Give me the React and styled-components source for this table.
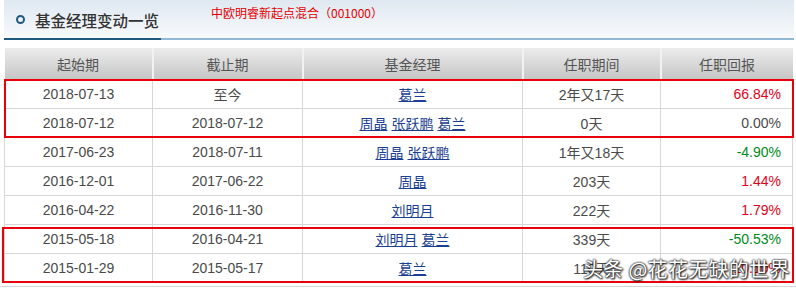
import styled, { createGlobalStyle } from 'styled-components';

const GlobalStyle = createGlobalStyle`
  body {
    margin: 0;
    background: #fff;
    font-family: "Liberation Sans", "Noto Sans CJK SC", sans-serif;
  }
`

const Page = styled.div`
  position: relative;
  width: 796px;
  height: 288px;
  overflow: hidden;
  padding-left: 4px;
  box-sizing: border-box;
`
const TitleBar = styled.div`
  width: 790px;
  height: 38px;
  background: linear-gradient(#dfe8f1, #f8fafc);
  display: flex;
  align-items: center;
`
const Ring = styled.span`
  width: 5px;
  height: 5px;
  border: 2px solid #1f5a7e;
  border-radius: 50%;
  margin-left: 12px;
  margin-right: 10px;
  margin-top: 1px;
`
const Title = styled.h2`
  margin: 2px 0 0;
  font-family: "Noto Sans CJK SC", sans-serif;
  font-size: 15.5px;
  font-weight: 500;
  color: #333;
  width: 176px;
`
const FundName = styled.span`
  font-family: "Noto Sans CJK SC", sans-serif;
  font-size: 12px;
  color: #e60000;
  align-self: flex-start;
  margin-top: 4px;
`
const Rule = styled.div`
  display: flex;
  width: 790px;
  height: 2px;
`
const RuleSeg = styled.div`
  height: 2px;
  width: ${p => p.$w};
  background: ${p => p.$c};
`
const Table = styled.table`
  margin-top: 8px;
  border-collapse: collapse;
  table-layout: fixed;
  width: 788px;
`
const Th = styled.th`
  height: 31px;
  padding: 0;
  font-family: "Noto Sans CJK SC", sans-serif;
  font-size: 14px;
  font-weight: normal;
  color: #555;
  background: linear-gradient(#ececec, #c6c6c6);
  border-left: 2px solid #f2f2f2;
  &:first-child { border-left: none; }
`
const Td = styled.td`
  height: 28px;
  padding: 0 ${p => (p.$right ? '11px' : '0')} 0 0;
  border: 1px solid #d6d6d6;
  text-align: ${p => (p.$right ? 'right' : 'center')};
  font-size: 14px;
  color: ${p => p.$color || '#4a4a4a'};
  font-family: "Liberation Sans", "Noto Sans CJK SC", sans-serif;
`
const Manager = styled.a`
  color: #1b3f93;
  text-decoration: underline;
  margin: 0 2px;
  font-family: "Noto Sans CJK SC", sans-serif;
  font-size: 14px;
`
const Mark = styled.div`
  position: absolute;
  left: ${p => p.$x}px;
  top: ${p => p.$y}px;
  width: ${p => p.$w}px;
  height: ${p => p.$h}px;
  border: 2px solid #e8000b;
  box-sizing: border-box;
  pointer-events: none;
`
const Below = styled.div`
  position: absolute;
  left: 0;
  top: 286px;
  width: 796px;
  height: 2px;
  border-top: 1px solid #d6d6d6;
`
const Watermark = styled.div`
  position: absolute;
  left: 583px;
  top: 254px;
  font-family: "Noto Sans CJK SC", sans-serif;
  font-size: 20px;
  color: #fff;
  text-shadow: 0 0 2px #222, 0 0 2px #222, 1px 1px 2px #000;
  letter-spacing: 0.3px;
`

const cols = [148, 150, 220, 138, 132]
const heads = ['起始期', '截止期', '基金经理', '任职期间', '任职回报']

const rows = [
  ['2018-07-13', '至今', ['葛兰'], '2年又17天', '66.84%', '#e2001a'],
  ['2018-07-12', '2018-07-12', ['周晶', '张跃鹏', '葛兰'], '0天', '0.00%', '#4a4a4a'],
  ['2017-06-23', '2018-07-11', ['周晶', '张跃鹏'], '1年又18天', '-4.90%', '#008a1c'],
  ['2016-12-01', '2017-06-22', ['周晶'], '203天', '1.44%', '#e2001a'],
  ['2016-04-22', '2016-11-30', ['刘明月'], '222天', '1.79%', '#e2001a'],
  ['2015-05-18', '2016-04-21', ['刘明月', '葛兰'], '339天', '-50.53%', '#008a1c'],
  ['2015-01-29', '2015-05-17', ['葛兰'], '110天', '10.10%', '#e2001a'],
]

const App = () => {
  return (
    <Page>
      <GlobalStyle />
      <TitleBar>
        <Ring />
        <Title>基金经理变动一览</Title>
        <FundName>中欧明睿新起点混合（001000）</FundName>
      </TitleBar>
      <Rule>
        <RuleSeg $w="157px" $c="#1f5a7e" />
        <RuleSeg $w="633px" $c="#93b8d3" />
      </Rule>
      <Table>
        <colgroup>
          {cols.map((w, i) => <col key={i} style={{ width: w }} />)}
        </colgroup>
        <thead>
          <tr>
            {heads.map(h => <Th key={h}>{h}</Th>)}
          </tr>
        </thead>
        <tbody>
          {rows.map((r, i) => (
            <tr key={i}>
              <Td>{r[0]}</Td>
              <Td>{r[1]}</Td>
              <Td>
                {r[2].map(m => <Manager key={m}>{m}</Manager>)}
              </Td>
              <Td>{r[3]}</Td>
              <Td $right $color={r[5]}>{r[4]}</Td>
            </tr>
          ))}
        </tbody>
      </Table>
      <Below />
      <Mark $x={4} $y={79} $w={790} $h={59} />
      <Mark $x={2} $y={227} $w={792} $h={56} />
      <Watermark>头条 @花花无缺的世界</Watermark>
    </Page>
  )
}

export default App
